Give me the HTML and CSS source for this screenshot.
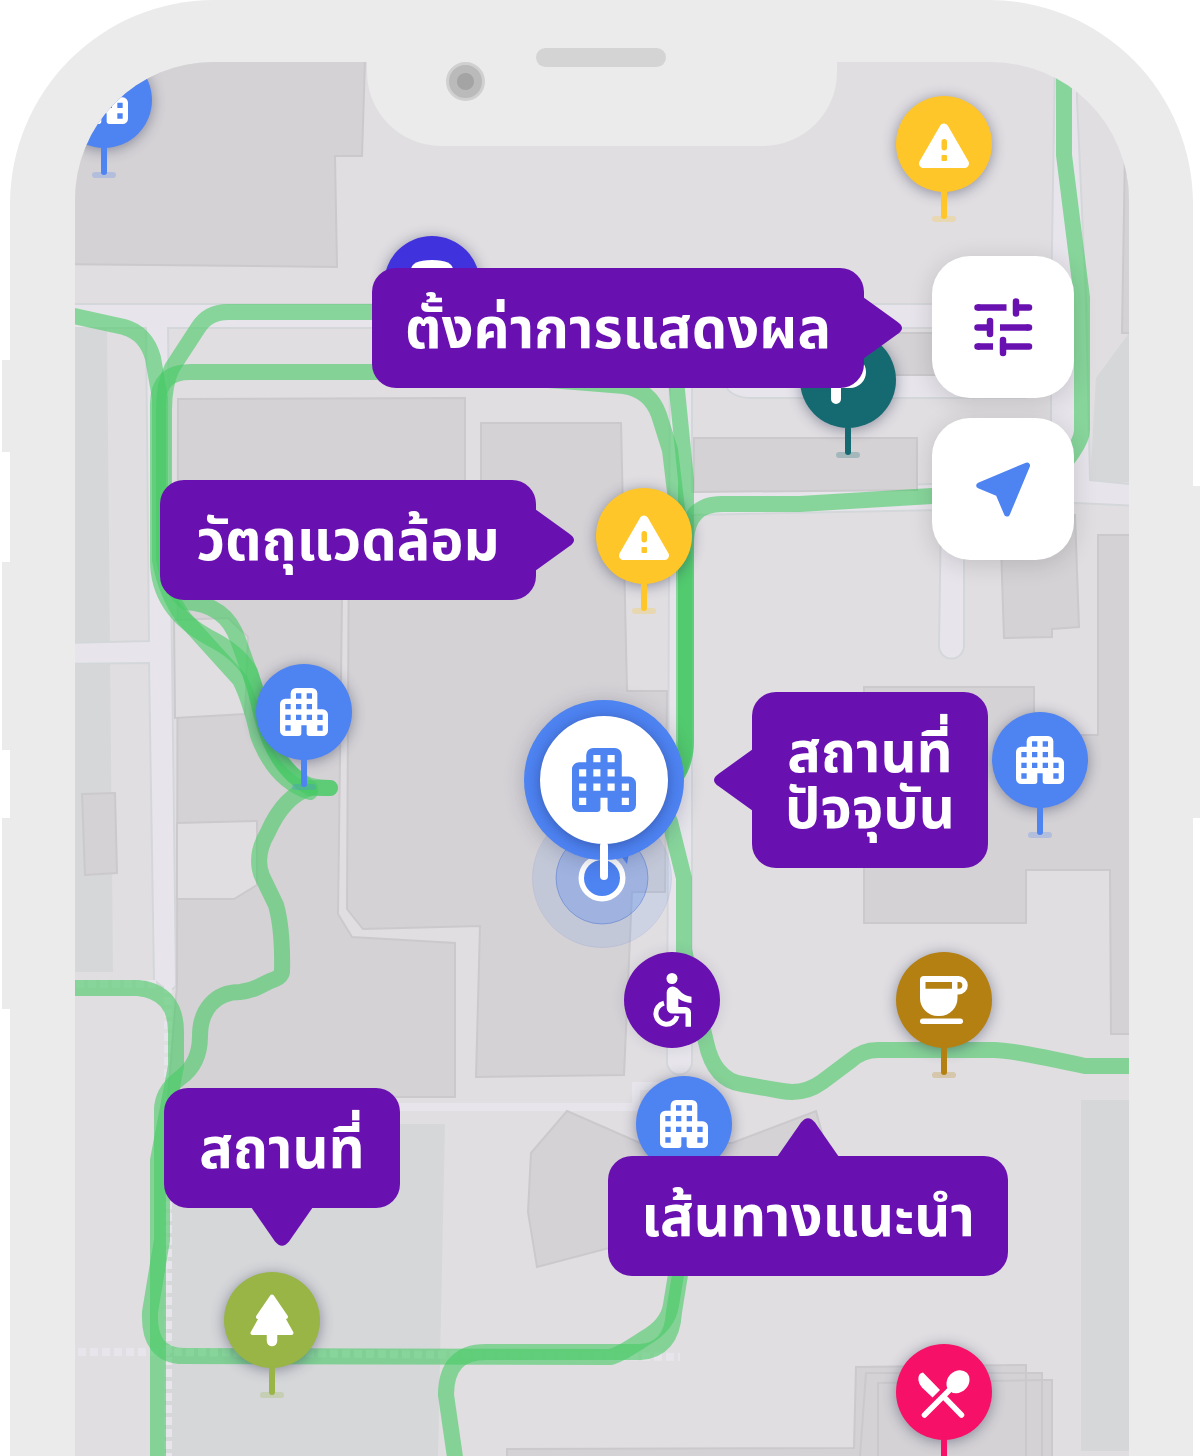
FILE: index.html
```html
<!DOCTYPE html>
<html lang="th">
<head>
<meta charset="utf-8">
<meta name="viewport" content="width=device-width, initial-scale=1">
<title>แผนที่</title>
<link rel="stylesheet" href="styles.css">
</head>
<body>
<svg class="defs" aria-hidden="true">
  <symbol id="building" viewBox="0 0 18 18">
    <path fill-rule="evenodd" d="M6 0h6a2 2 0 0 1 2 2v6h2a2 2 0 0 1 2 2v6a2 2 0 0 1-2 2h-5a1 1 0 0 1-1-1v-3H8v3a1 1 0 0 1-1 1H2a2 2 0 0 1-2-2V6a2 2 0 0 1 2-2h2V2a2 2 0 0 1 2-2zM6 2v2h2V2zM10 2v2h2V2zM2 6v2h2V6zM6 6v2h2V6zM10 6v2h2V6zM2 10v2h2v-2zM6 10v2h2v-2zM10 10v2h2v-2zM14 10v2h2v-2zM2 14v2h2v-2zM14 14v2h2v-2z"/>
  </symbol>
  <symbol id="warning" viewBox="0 0 96 96">
    <path class="round" stroke-width="9" d="M48 32L27.5 67.5h41z"/>
    <rect x="45.500" y="43" width="5.500" height="11.500" rx="2.750" fill="#ffc629"/>
    <rect x="45.500" y="59" width="5.500" height="6" rx="1" fill="#ffc629"/>
  </symbol>
</svg>
<main class="phone">
  <i class="side side-mute"></i><i class="side side-up"></i><i class="side side-down"></i><i class="side side-power"></i>
  <div class="notch"><i class="camera"></i><i class="speaker"></i></div>
  <section class="screen" aria-label="แผนที่">
    <svg class="map" viewBox="75 62 1054 1394" preserveAspectRatio="xMinYMin slice" aria-hidden="true">
      <g class="park">
        <path d="M75 328H107L113 972H75zM180 1124H445L438 1456H165L168 1240zM1129 333L1096 378L1090 482H1129zM1081 1100H1129V1451H1081z"/>
      </g>
      <g class="road">
        <path d="M60 304H1051L1055 62H1077V100L1086 300L1090 480L1140 485V506L1076 503L964 509V646A12 12 0 0 1 939 646L941 510L692 515V1062A12 12 0 0 1 667 1062L670 328H168L176 985Q172 996 154 980L149 663L60 664V643L149 641L146 328H60z"/>
        <path d="M692 328H1051V480L692 492z" class="land"/>
        <path d="M720 375H1026V398H748Q726 396 724 380z"/>
        <path class="lane" d="M400 1107H636V1086H668"/>
        <path class="dash" d="M78 1352H170L680 1357M168 985V1456M76 984H160"/>
      </g>
      <g class="building">
        <path d="M60 60H365L362 156H335L337 267L60 264z"/>
        <path d="M178 399L465 398V520H343L338 914L352 937L455 943V1097H168L177 985z"/>
        <path d="M481 423H621L627 691H667L665 892H632L624 1075L476 1077L480 926L363 929L347 909L349 520H481z"/>
        <path d="M82 794L115 793L117 873L85 875z"/>
        <path d="M567 1111L640 1143H732L816 1111L832 1170L609 1248L537 1267L528 1212L531 1153z"/>
        <path d="M694 438H917V490L694 492zM720 333H1026V375H720zM1125 150L1122 333H1140V150z"/>
        <path d="M1000 515H1075L1079 627L1052 629V637L1004 638z"/>
        <path d="M1098 535H1140V1034H1111L1110 870H1026V923H864V687H1034V735H1098z"/>
        <path d="M856 1367L1026 1365V1373H1042V1380H1052V1470H507V1449L854 1448z"/>
        <path d="M860 1456L866 1373H1026V1470M878 1470V1383L1042 1380V1470"/>
        <path class="yard" d="M174 620L228 618L248 637L245 714L175 718zM177 823L257 821V885L234 899H177z"/>
      </g>
      <g class="route">
        <path d="M60 313L124 327Q146 333 153 358L160 398V560Q166 594 184 618L240 680Q250 700 258 735Q274 780 310 792"/>
        <path d="M480 312H228Q208 312 198 328L172 368Q164 384 164 410V560Q170 590 186 602Q226 604 238 640L256 690Q268 760 300 780Q308 788 330 788"/>
        <path d="M330 788H310Q282 772 268 735L250 672Q238 652 210 638Q158 610 158 560V404Q158 372 190 372H440L575 382L624 386Q650 390 659 415L670 450L676 500L684 560V745Q684 762 674 776"/>
        <path d="M676 380L686 480V740Q686 762 676 776"/>
        <path d="M676 776Q686 762 686 740V540Q688 504 722 504H800L932 496L1040 490Q1082 448 1082 430V298L1064 155V60"/>
        <path d="M660 800L670 822L684 878V950L706 1042Q714 1080 742 1084L782 1091Q804 1095 822 1082L850 1061Q862 1050 878 1050H994Q1012 1050 1085 1066H1140"/>
        <path d="M60 988H138Q176 992 176 1032V1066L158 1160V1470"/>
        <path d="M310 788Q284 796 268 832Q254 856 262 876L276 905Q283 930 282 972Q281 978 270 981L258 987Q250 991 240 992C215 992 200 1010 200 1036Q200 1064 180 1078Q162 1092 162 1110V1240L150 1312Q148 1356 184 1356L610 1357Q618 1356 645 1338Q668 1325 671 1305L680 1250"/>
        <path d="M456 1464L446 1395Q446 1352 486 1352H640Q672 1350 674 1312L684 1250"/>
      </g>
    </svg>

    <div class="pin blue p-corner"><svg class="b"><use href="#building"/></svg></div>
    <div class="pin indigo p-bus"><svg viewBox="0 0 96 96"><path d="M27 34q0-10 21-10t21 10v30a4 4 0 0 1-4 4H31a4 4 0 0 1-4-4z"/></svg></div>
    <div class="pin yellow p-warn1"><svg><use href="#warning"/></svg></div>
    <div class="pin teal p-park"><svg viewBox="0 0 96 96"><path class="line" stroke-width="10" d="M36 67V29h14a11 11 0 0 1 0 22H36"/></svg></div>
    <div class="pin yellow p-warn2"><svg><use href="#warning"/></svg></div>
    <div class="pin blue p-b1"><svg class="b"><use href="#building"/></svg></div>
    <div class="pin blue p-b2"><svg class="b"><use href="#building"/></svg></div>
    <svg class="here" viewBox="0 0 140 140" aria-hidden="true">
      <circle class="range" cx="70" cy="70" r="69.500"/>
      <circle class="halo" cx="70" cy="70" r="46"/>
      <path class="dot" d="M86 44L98 40L95 56z"/>
      <circle cx="70" cy="70" r="23.500" fill="#fff"/>
      <circle class="dot" cx="70" cy="70" r="18"/>
    </svg>
    <div class="selected"><svg class="b"><use href="#building"/></svg></div>
    <div class="pin purple p-access"><svg viewBox="0 0 96 96"><circle cx="48" cy="26.500" r="5.500"/><path d="M48.500 34.500q3.500 0 6.500 3.500q5 6 12.500 6.700v6.200q-8-.8-13.200-4.500V55h7a5.500 5.500 0 0 1 5.700 5.500v14.200h-5.500V61.500H48.500a5.600 5.600 0 0 1-5.800-5.600V40.300a5.800 5.800 0 0 1 5.800-5.800z"/><path class="line butt" stroke-width="5" d="M40 51.100A10.700 10.700 0 1 0 53 64"/></svg></div>
    <div class="pin brown p-cafe"><svg viewBox="0 0 96 96"><path fill-rule="evenodd" d="M28 24H62.500a9.300 9.300 0 0 1 0 18.600H61.500V46A18 18 0 0 1 43.500 64h-1.500A18 18 0 0 1 24 46V28a4 4 0 0 1 4-4zM29.500 30v6.700H56V30zM61.500 30v6.700h1.500a3.300 3.300 0 0 0 0-6.700z"/><rect x="24" y="66.500" width="43" height="5.500" rx="2.750"/></svg></div>
    <div class="pin blue p-b3"><svg class="b"><use href="#building"/></svg></div>
    <div class="pin olive p-tree"><svg viewBox="0 0 96 96"><path class="round" stroke-width="4" d="M48 24.500L34 45h3.500L28.500 61h39L58.500 45H62z"/><path class="line" stroke-width="10.500" d="M48 60v9"/></svg></div>
    <div class="pin pink p-food"><svg viewBox="0 0 96 96"><path d="M27 28.500Q22 29 22.400 36Q22.800 40 26 43.500L36.500 53.500L44 46z"/><ellipse cx="62" cy="37.700" rx="10.500" ry="12.500" transform="rotate(45 62 37.700)"/><path class="line" stroke-width="5.500" d="M55 44.500L28.500 71M48 53L65.500 71"/></svg></div>

    <div class="controls">
      <button type="button" aria-label="ตัวกรอง"><svg viewBox="0 0 142 142"><path class="tune" d="M45.500 51.500h1M45.500 71.500h12.500M45.500 90.500h1M84 51.500h13M96 71.500h1M71 90.500h26M84 45.500v12M58 65v13M71 84v13"/><path class="tune butt" d="M45.500 51.500h29M68 71.500h28.500M45.500 90.500h15.500"/></svg></button>
      <button type="button" aria-label="ตำแหน่งของฉัน"><svg viewBox="0 0 142 142"><path class="nav" d="M47.300 67.500L95 47.500L75 95.500L66.500 75.500z"/></svg></button>
    </div>

    <p class="callout right c-settings">ตั้งค่าการแสดงผล<svg viewBox="0 0 40 64"><path d="M0 1L34 25.500Q44 32 34 38.500L0 63z"/></svg></p>
    <p class="callout right c-object">วัตถุแวดล้อม<svg viewBox="0 0 40 64"><path d="M0 1L34 25.500Q44 32 34 38.500L0 63z"/></svg></p>
    <p class="callout left c-current">สถานที่<br>ปัจจุบัน<svg viewBox="0 0 40 64"><path d="M40 1L6 25.500Q-4 32 6 38.500L40 63z"/></svg></p>
    <p class="callout down c-place">สถานที่<svg viewBox="0 0 64 40"><path d="M1 0L25 34.500Q32 43 39 34.500L63 0z"/></svg></p>
    <p class="callout up c-route">เส้นทางแนะนำ<svg viewBox="0 0 64 40"><path d="M1 40L25 5.500Q32 -3 39 5.500L63 40z"/></svg></p>
  </section>
</main>
</body>
</html>
```
FILE: styles.css
```css
* { box-sizing: border-box; }
body { margin: 0; background: #fff; overflow-x: hidden; }
.defs { position: absolute; width: 0; height: 0; }

.phone {
  position: relative;
  display: flex;
  min-height: 100vh;
  margin: 0 7px 0 10px;
  padding: 62px 64px 0 65px;
  border-radius: 204px 204px 0 0;
  background: #ebebeb;
}
.side { position: absolute; width: 8px; left: -8px; background: #ebebeb; }
.side-mute { top: 360px; height: 92px; }
.side-up { top: 562px; height: 188px; }
.side-down { top: 818px; height: 191px; }
.side-power { left: auto; right: -7px; top: 486px; height: 332px; }

.notch {
  position: absolute;
  z-index: 2;
  top: 62px;
  left: 357px;
  width: 470px;
  height: 84px;
  border-radius: 0 0 74px 74px;
  background: #ebebeb;
}
.speaker {
  position: absolute;
  top: -14px;
  left: 169px;
  width: 130px;
  height: 19px;
  border-radius: 10px;
  background: #d4d4d4;
}
.camera {
  position: absolute;
  top: 0;
  left: 79px;
  width: 39px;
  height: 39px;
  border: 3px solid #d0d0d0;
  border-radius: 50%;
  background: radial-gradient(circle, #a4a4a4 8px, #bababa 9px);
}

.screen {
  position: relative;
  flex: 1;
  overflow: hidden;
  border-radius: 138px 138px 0 0;
  background: #e0dee1;
}
.map { position: absolute; inset: 0; width: 100%; height: 100%; }
.park { fill: #d6d7d9; }
.road { fill: #e7e5eb; stroke: #d4d7da; stroke-width: 2; }
.road .land { fill: #e0dee1; }
.road .lane { fill: none; stroke: #e7e5eb; stroke-width: 8; }
.road .dash { fill: none; stroke: #e7e5eb; stroke-width: 8; stroke-dasharray: 8 4; }
.building { fill: #d4d2d5; stroke: #cbc9cc; stroke-width: 2; }
.building .yard { fill: #e0dee1; }
.route {
  fill: none;
  stroke: #48ca66;
  stroke-opacity: .6;
  stroke-width: 16;
  stroke-linecap: round;
}

.pin {
  position: absolute;
  width: 96px;
  height: 96px;
  border-radius: 50%;
  background: currentColor;
  box-shadow: 0 2px 14px rgba(40, 45, 80, .45);
}
.pin::before, .pin::after {
  content: "";
  position: absolute;
  border-radius: 3px;
  background: currentColor;
}
.pin::before { top: 120px; left: 36px; width: 24px; height: 6px; opacity: .25; }
.pin::after { top: 94px; left: 45px; width: 6px; height: 29px; }
.pin.purple::before, .pin.purple::after { display: none; }
.pin.purple { box-shadow: 0 0 14px rgba(40, 45, 80, .12); }
.pin svg { display: block; width: 96px; height: 96px; fill: #fff; }
.pin svg.b { padding: 24px; }
.round { stroke: #fff; stroke-linejoin: round; }
.line { fill: none; stroke: #fff; stroke-linecap: round; }
.butt { stroke-linecap: butt; }

.blue { color: #4e83f2; }
.indigo { color: #4032dd; }
.yellow { color: #ffc629; }
.teal { color: #156a72; }
.purple { color: #6910b1; }
.brown { color: #b48011; }
.olive { color: #98b546; }
.pink { color: #f61067; }

.p-corner { left: -19px; top: -10px; }
.p-bus { left: 309px; top: 174px; }
.p-warn1 { left: 821px; top: 34px; }
.p-park { left: 725px; top: 270px; }
.p-warn2 { left: 521px; top: 426px; }
.p-b1 { left: 181px; top: 602px; }
.p-b2 { left: 917px; top: 650px; }
.p-access { left: 549px; top: 890px; }
.p-cafe { left: 821px; top: 890px; }
.p-b3 { left: 561px; top: 1014px; }
.p-tree { left: 149px; top: 1210px; }
.p-food { left: 821px; top: 1282px; }

.here {
  position: absolute;
  left: 457px;
  top: 746px;
  width: 140px;
  height: 140px;
}
.range { fill: rgba(78, 131, 242, .12); stroke: rgba(78, 100, 200, .1); }
.halo { fill: rgba(78, 131, 242, .3); stroke: rgba(60, 100, 200, .4); }
.dot { fill: #4e83f2; }
.selected {
  position: absolute;
  left: 449px;
  top: 638px;
  width: 160px;
  height: 160px;
  border: 16px solid #4e83f2;
  border-radius: 50%;
  background: #fff;
  box-shadow: 0 2px 20px rgba(40, 45, 80, .25);
}
.selected svg { display: block; width: 128px; height: 128px; padding: 32px; fill: #4e83f2; }
.selected::after {
  content: "";
  position: absolute;
  left: 60px;
  top: 126px;
  width: 8px;
  height: 38px;
  border-radius: 4px;
  background: #fff;
}
.selected::before {
  content: "";
  position: absolute;
  inset: 0;
  border-radius: 50%;
  box-shadow: 0 2px 14px rgba(20, 30, 80, .4);
}

.controls {
  position: absolute;
  top: 194px;
  right: 55px;
  display: flex;
  flex-direction: column;
  gap: 20px;
}
.controls button {
  width: 142px;
  height: 142px;
  padding: 0;
  border: 0;
  border-radius: 38px;
  background: #fff;
  box-shadow: 0 4px 24px rgba(0, 0, 0, .14);
}
.controls svg { display: block; }
.tune { fill: none; stroke: #6910b1; stroke-width: 6.500; stroke-linecap: round; }
.tune.butt { stroke-linecap: butt; }
.nav { fill: #4e83f2; stroke: #4e83f2; stroke-width: 6; stroke-linejoin: round; }

.callout {
  position: absolute;
  margin: 0;
  padding: 35px 0 29px;
  border-radius: 24px;
  background: #6910b1;
  color: #fff;
  font: 700 56px/56px "Noto Sans Thai", "Prompt", "Noto Sans", sans-serif;
  text-align: center;
  white-space: nowrap;
}
.callout svg { position: absolute; width: 40px; height: 64px; fill: #6910b1; }
.right svg { left: 100%; top: 28px; margin-left: -1px; }
.left svg { right: 100%; top: 56px; margin-right: -1px; }
.up svg, .down svg { left: 50%; width: 64px; height: 40px; margin-left: -32px; }
.down svg { top: 100%; margin-top: -1px; }
.up svg { bottom: 100%; margin-bottom: -1px; }
.c-settings { left: 297px; top: 206px; width: 492px; }
.c-object { left: 85px; top: 418px; width: 376px; }
.c-current { left: 677px; top: 630px; width: 236px; }
.c-place { left: 89px; top: 1026px; width: 236px; }
.c-route { left: 533px; top: 1094px; width: 400px; }
```
